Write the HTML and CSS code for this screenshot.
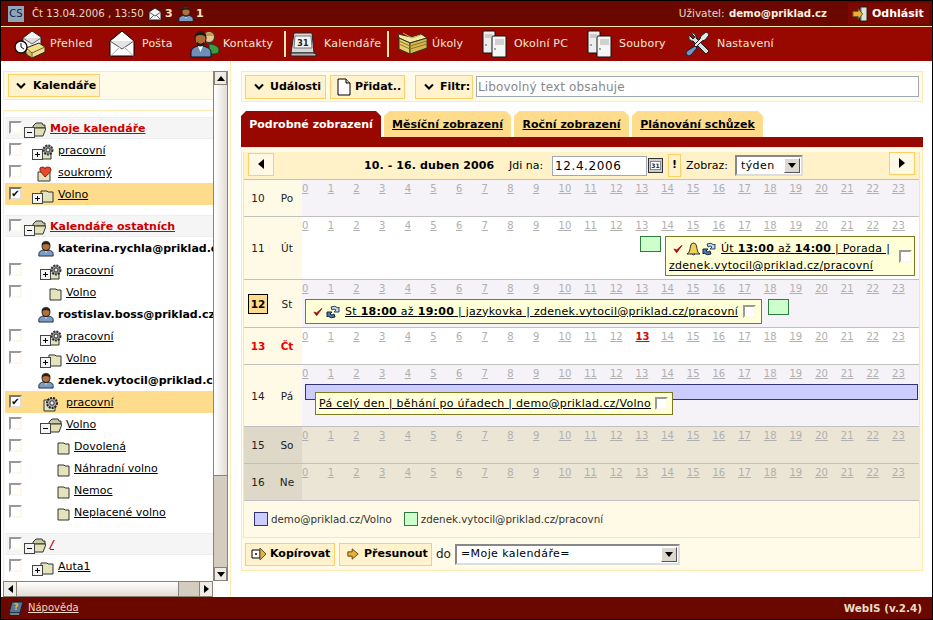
FILE: index.html
```html
<!DOCTYPE html>
<html lang="cs">
<head>
<meta charset="utf-8">
<title>WebIS - Kalendáře</title>
<link rel="stylesheet" href="styles.css">
</head>
<body>
<svg class="defs" width="0" height="0" aria-hidden="true">
<defs>
<symbol id="mail" viewBox="0 0 26 28"><path d="M1 11 13 1l12 10v15H1z" fill="#fff" stroke="#000"/><path d="M1 11l12 8 12-8" fill="#e4e4e4" stroke="#555"/><path d="M1.500 26 11 17M24.500 26 15 17" stroke="#aaa" fill="none"/></symbol>
<symbol id="mini-mail" viewBox="0 0 14 14"><path d="M1 5 7 1l6 4v8H1z" fill="#f4f4f4" stroke="#222"/><path d="M1 5l6 4 6-4M1 13l5-5M13 13 8 8" fill="none" stroke="#666"/></symbol>
<symbol id="person" viewBox="0 0 18 18"><path d="M1 17.500v-3c0-2 2-3 5-4h6c3 1 5 2 5 4v3z" fill="#7d9cc4" stroke="#123"/><path d="M7 10.500 9 14l2-3.500z" fill="#fff"/><path d="M4.500 6c0-4 2-5 4.500-5s4.500 1 4.500 5-2 5.500-4.500 5.500S4.500 10 4.500 6z" fill="#b5703a" stroke="#222"/><path d="M4.500 6V3q4.500-3 9 0v3q-1-2-4.500-2T4.500 6zM6 9q3 3.500 6 0v2l-3 1-3-1z" fill="#222"/></symbol>
<symbol id="overview" viewBox="0 0 31 29"><path d="M9 8 18 1l9 6v11H9z" fill="#f3f3f3" stroke="#222"/><path d="M9 8l9 6 9-6" fill="#ddd" stroke="#666"/><path d="M12 18l13-5 6 4v5l-13 6-6-4z" fill="#f2df8e" stroke="#222"/><path d="M12 18l6 5 13-6M18 23v5" fill="none" stroke="#6b5a1e"/><path d="M13 23h4M14 25h4" stroke="#b59a3a"/><circle cx="7" cy="17" r="6" fill="#fafafa" stroke="#111" stroke-width="1.400"/><path d="M7 13v4l3 2" fill="none" stroke="#111"/></symbol>
<symbol id="contacts" viewBox="0 0 30 28"><circle cx="19" cy="7" r="5.500" fill="#e4c88e" stroke="#333"/><path d="M15 4q4-3 8 0v2h-8z" fill="#c79a50"/><path d="M19 14c6 0 10 3 10 6s-2 4-5 4h-5z" fill="#3e9a3a" stroke="#143"/><path d="M1 27v-5c0-3 3-5 7-6h5c4 1 8 3 8 6v5z" fill="#6d8fb8" stroke="#012"/><path d="M8 16l2.500 6 2.500-6z" fill="#fff"/><path d="M5 8c0-4 2-6 5.500-6S16 4 16 8s-2 8-5.500 8S5 12 5 8z" fill="#b06c36" stroke="#111"/><path d="M5 8V4q5.500-4 11 0v4q-1-3-5.500-3T5 8zM7 12q3.500 3.500 7 0v3l-3.500 1L7 15z" fill="#1b1b1b"/></symbol>
<symbol id="calendar" viewBox="0 0 28 26"><path d="M4 2h18l2 20H1z" fill="#d8d8d8" stroke="#222"/><path d="M5 5h16l1 12H4z" fill="#f4f4f4" stroke="#777"/><path d="M1 22h23l3 2-2 1H1z" fill="#bbb" stroke="#222"/><text x="13" y="15" class="cal-num">31</text></symbol>
<symbol id="tasks" viewBox="0 0 32 26"><path d="M2 3 3 7l11 5 17-5-6-4-10 3z" fill="#f5e7a4" stroke="#332"/><path d="M3 7 14 12v11L3 18z" fill="#e7cf6c" stroke="#332"/><path d="M14 12 31 7v10L14 23z" fill="#d8b84e" stroke="#332"/><path d="M3 10l11 5M3 13l11 5M14 15l17-5M14 18l17-5" stroke="#8b7426" fill="none"/><path d="M7 2 16 7 25 4" stroke="#c9ad4a" fill="none"/></symbol>
<symbol id="server" viewBox="0 0 26 28"><path d="M2 2q0-1 1-1h10q1 0 1 1v20q0 1-1 1H3q-1 0-1-1z" fill="#eee" stroke="#111"/><path d="M11 7q0-1 1-1h12q1 0 1 1v19q0 1-1 1H12q-1 0-1-1z" fill="#f6f6f6" stroke="#111"/><path d="M4 5h7M4 7h7M14 10h9M14 12h9M14 14h9" stroke="#aaa" fill="none"/><circle cx="5" cy="15" r="1" fill="#888"/><circle cx="14" cy="19" r="1" fill="#888"/></symbol>
<symbol id="tools" viewBox="0 0 24 26"><path d="M5 2 9 6 7 8 3 4q-1 4 2 6l2 0 13 13 3-3L10 7V5Q8 1 5 2z" fill="#ddd" stroke="#222"/><path d="M22 2l-2-1-5 4-1 3L8 14l2 2 6-6 3-1 4-5z" fill="#e8e8e8" stroke="#222"/><path d="M9 15 11 17 5 24q-2 2-4 0t0-4z" fill="#6d96c0" stroke="#123"/></symbol>
<symbol id="book" viewBox="0 0 16 16"><path d="M4 2h11l-3 11H1z" fill="#5b7590" stroke="#123"/><path d="M1 13h11l-.5 2H2z" fill="#ddd" stroke="#123"/><text x="8" y="10" class="book-q">?</text></symbol>
<symbol id="logout" viewBox="0 0 18 18"><path d="M9 1h8v16H9z" fill="#999" stroke="#111"/><path d="M11 2h5v14h-5z" fill="#dde5d8"/><path d="M1 6h6V3l5 6-5 6v-3H1z" fill="#eeb030" stroke="#553"/></symbol>
<symbol id="folder" viewBox="0 0 22 16"><path d="M10 4V3h6l1 1h4v10H10z" fill="#e4e4bc" stroke="#333"/></symbol>
<symbol id="folder-plus" viewBox="0 0 22 16"><path d="M9 4V3h6l1 1h5v10H9z" fill="#e4e4bc" stroke="#333"/><rect x=".5" y="5.500" width="10" height="10" fill="#f4f4f4" stroke="#444"/><path d="M3 10.500h5M5.500 8v5" stroke="#000"/></symbol>
<symbol id="folder-minus" viewBox="0 0 22 16"><path d="M9 4 12 1h6l1 2h2v3h-9l-3 8z" fill="#c9c9a4" stroke="#333"/><path d="M9 6h13l-3 8H9z" fill="#e2e2b6" stroke="#333"/><rect x=".5" y="5.500" width="10" height="10" fill="#f4f4f4" stroke="#444"/><path d="M3 10.500h5" stroke="#000"/></symbol>
<symbol id="gear-plus" viewBox="0 0 22 16"><path d="M9 6h10v9H9z" fill="#e4e4bc" stroke="#333"/><circle cx="16" cy="6" r="4.500" fill="#999" stroke="#333" stroke-width="2" stroke-dasharray="2 1"/><circle cx="16" cy="6" r="2" fill="#eee" stroke="#333"/><rect x=".5" y="5.500" width="10" height="10" fill="#f4f4f4" stroke="#444"/><path d="M3 10.500h5M5.500 8v5" stroke="#000"/></symbol>
<symbol id="gear" viewBox="0 0 22 16"><path d="M4 4h11v11H4z" fill="#e4e4bc" stroke="#333"/><circle cx="12" cy="7" r="5" fill="#aaa" stroke="#222" stroke-width="2" stroke-dasharray="2 1"/><circle cx="12" cy="7" r="2.200" fill="#eee" stroke="#333"/></symbol>
<symbol id="heart" viewBox="0 0 22 16"><path d="M6 6h12v9H6z" fill="#e4e4bc" stroke="#333"/><path d="M13 11 8 5q-1-4 2-4t3 2q0-2 3-2t3 3q0 2-6 7z" fill="#e64a28" stroke="#822"/></symbol>
<symbol id="check" viewBox="0 0 11 10"><path d="M1 5 4 9 10 1 4 6z" fill="#a11" stroke="#a11"/></symbol>
<symbol id="bell" viewBox="0 0 15 14"><path d="M1 12q2-1 2.500-3t1-5q.5-3 3-3t3 3q.5 3 1 5t2.500 3z" fill="#f2cf5a" stroke="#333"/><path d="M6 12q1.500 2 3 0" fill="#c99" stroke="#333"/></symbol>
<symbol id="sync" viewBox="0 0 14 14"><path d="M5 2q4-2 7 1l1-1v5H8l2-2Q8 3 6 5z" fill="#cdd8e8" stroke="#246"/><path d="M9 12q-4 2-7-1l-1 1V7h5L4 9q2 2 4 0z" fill="#4a7db0" stroke="#123"/></symbol>
<symbol id="chev" viewBox="0 0 10 7"><path d="M1 1.500 5 5.500 9 1.500" fill="none" stroke="#000" stroke-width="2"/></symbol>
<symbol id="doc" viewBox="0 0 14 18"><path d="M1 1h8l4 4v12H1z" fill="#fff" stroke="#000"/><path d="M9 1v4h4" fill="#ccc" stroke="#000"/></symbol>
<symbol id="copy" viewBox="0 0 16 14"><path d="M1 3h8v8H1z" fill="#fff" stroke="#000"/><path d="M5 6v2M4 7h2" stroke="#000"/><path d="M9 1l6 6-6 6z" fill="#eeb030" stroke="#553"/></symbol>
<symbol id="move" viewBox="0 0 14 14"><path d="M1 4.500h5V1l7 6-7 6V9.500H1z" fill="#eeb030" stroke="#432"/></symbol>
<symbol id="cal-mini" viewBox="0 0 15 15"><rect x=".5" y=".5" width="14" height="14" fill="#ccc" stroke="#333"/><rect x="2.500" y="3.500" width="10" height="8" fill="#fff" stroke="#888"/><text x="7.500" y="10" class="cal-mini-num">31</text></symbol>
</defs>
</svg>

<div class="app">
  <header class="topbar">
    <span class="lang">CS</span>
    <span class="clock">Čt 13.04.2006 , 13:50</span>
    <svg class="ico-mail"><use href="#mini-mail"/></svg><b class="count count-mail">3</b>
    <svg class="ico-person"><use href="#person"/></svg><b class="count">1</b>
    <span class="user">Uživatel: <b>demo@priklad.cz</b></span>
    <a class="logout"><svg class="ico-logout"><use href="#logout"/></svg>Odhlásit</a>
  </header>

  <nav class="nav">
    <a class="nav-item"><svg class="i-overview"><use href="#overview"/></svg>Přehled</a>
    <a class="nav-item"><svg class="i-mail"><use href="#mail"/></svg>Pošta</a>
    <a class="nav-item"><svg class="i-contacts"><use href="#contacts"/></svg>Kontakty</a>
    <a class="nav-item nav-current"><svg class="i-calendar"><use href="#calendar"/></svg>Kalendáře</a>
    <a class="nav-item"><svg class="i-tasks"><use href="#tasks"/></svg>Úkoly</a>
    <a class="nav-item"><svg class="i-server"><use href="#server"/></svg>Okolní PC</a>
    <a class="nav-item"><svg class="i-server"><use href="#server"/></svg>Soubory</a>
    <a class="nav-item"><svg class="i-tools"><use href="#tools"/></svg>Nastavení</a>
  </nav>

  <main class="main">
    <aside class="left">
      <div class="left-col">
        <div class="left-head"><button class="btn btn-cal"><svg class="chev"><use href="#chev"/></svg>Kalendáře</button></div>
        <div class="tree">
          <section class="group">
            <div class="row row-head"><i class="cb"></i><svg class="node"><use href="#folder-minus"/></svg><a class="title">Moje kalendáře</a></div>
            <div class="row l1"><i class="cb"></i><svg class="node"><use href="#gear-plus"/></svg><a>pracovní</a></div>
            <div class="row l1"><i class="cb"></i><svg class="node"><use href="#heart"/></svg><a>soukromý</a></div>
            <div class="row l1 row-on"><i class="cb cb-on">✔</i><svg class="node"><use href="#folder-plus"/></svg><a>Volno</a></div>
          </section>
          <section class="group">
            <div class="row row-head"><i class="cb"></i><svg class="node"><use href="#folder-minus"/></svg><a class="title">Kalendáře ostatních</a></div>
            <div class="row row-user"><svg class="node-person"><use href="#person"/></svg><b>katerina.rychla@priklad.cz</b></div>
            <div class="row l2"><i class="cb"></i><svg class="node"><use href="#gear-plus"/></svg><a>pracovní</a></div>
            <div class="row l2"><i class="cb"></i><svg class="node"><use href="#folder"/></svg><a>Volno</a></div>
            <div class="row row-user"><svg class="node-person"><use href="#person"/></svg><b>rostislav.boss@priklad.cz</b></div>
            <div class="row l2"><i class="cb"></i><svg class="node"><use href="#gear-plus"/></svg><a>pracovní</a></div>
            <div class="row l2"><i class="cb"></i><svg class="node"><use href="#folder-plus"/></svg><a>Volno</a></div>
            <div class="row row-user"><svg class="node-person"><use href="#person"/></svg><b>zdenek.vytocil@priklad.cz</b></div>
            <div class="row l2 row-on"><i class="cb cb-on">✔</i><svg class="node"><use href="#gear"/></svg><a>pracovní</a></div>
            <div class="row l2"><i class="cb"></i><svg class="node"><use href="#folder-minus"/></svg><a>Volno</a></div>
            <div class="row l3"><i class="cb"></i><svg class="node"><use href="#folder"/></svg><a>Dovolená</a></div>
            <div class="row l3"><i class="cb"></i><svg class="node"><use href="#folder"/></svg><a>Náhradní volno</a></div>
            <div class="row l3"><i class="cb"></i><svg class="node"><use href="#folder"/></svg><a>Nemoc</a></div>
            <div class="row l3"><i class="cb"></i><svg class="node"><use href="#folder"/></svg><a>Neplacené volno</a></div>
          </section>
          <section class="group">
            <div class="row row-head"><i class="cb"></i><svg class="node"><use href="#folder-minus"/></svg><a class="title slash">/</a></div>
            <div class="row l1"><i class="cb"></i><svg class="node"><use href="#folder-plus"/></svg><a>Auta1</a></div>
          </section>
        </div>
      </div>
      <div class="vscroll">
        <span class="sb-btn"><i class="tri tri-up"></i></span>
        <span class="sb-thumb sb-thumb-v"></span>
        <span class="sb-track"></span>
        <span class="sb-btn"><i class="tri tri-down"></i></span>
      </div>
      <div class="hscroll">
        <span class="sb-btn"><i class="tri tri-left"></i></span>
        <span class="sb-thumb sb-thumb-h"></span>
        <span class="sb-track"></span>
        <span class="sb-btn"><i class="tri tri-right"></i></span>
      </div>
    </aside>

    <section class="right">
      <div class="toolbar">
        <button class="btn btn-events"><svg class="chev"><use href="#chev"/></svg>Události</button>
        <button class="btn btn-add"><svg class="ico-doc"><use href="#doc"/></svg>Přidat..</button>
        <button class="btn btn-filter"><svg class="chev"><use href="#chev"/></svg>Filtr:</button>
        <input class="filter" type="text" placeholder="Libovolný text obsahuje">
      </div>

      <div class="tabs">
        <a class="tab tab-on tab-1">Podrobné zobrazení</a>
        <a class="tab tab-2">Měsíční zobrazení</a>
        <a class="tab tab-3">Roční zobrazení</a>
        <a class="tab tab-4">Plánování schůzek</a>
      </div>
      <div class="tabline"></div>

      <div class="cal">
        <div class="cal-inner">
          <div class="cal-head">
            <button class="btn btn-nav"><i class="tri tri-left tri-big"></i></button>
            <b class="range">10. - 16. duben 2006</b>
            <span class="goto">Jdi na:</span>
            <input class="date" type="text" value="12.4.2006">
            <svg class="ico-calmini"><use href="#cal-mini"/></svg>
            <button class="btn btn-ex">!</button>
            <span class="show">Zobraz:</span>
            <span class="select select-week">týden<i class="sel-arrow"><i class="tri tri-down"></i></i></span>
            <button class="btn btn-nav btn-next"><i class="tri tri-right tri-big"></i></button>
          </div>

          <div class="day day-a">
            <div class="day-label"><span class="num">10</span><span class="dn">Po</span></div>
            <div class="slots">
              <div class="hours"><a>0</a><a>1</a><a>2</a><a>3</a><a>4</a><a>5</a><a>6</a><a>7</a><a>8</a><a>9</a><a>10</a><a>11</a><a>12</a><a>13</a><a>14</a><a>15</a><a>16</a><a>17</a><a>18</a><a>19</a><a>20</a><a>21</a><a>22</a><a>23</a></div>
            </div>
          </div>

          <div class="day day-b">
            <div class="day-label"><span class="num">11</span><span class="dn">Út</span></div>
            <div class="slots">
              <div class="hours"><a>0</a><a>1</a><a>2</a><a>3</a><a>4</a><a>5</a><a>6</a><a>7</a><a>8</a><a>9</a><a>10</a><a>11</a><a>12</a><a>13</a><a>14</a><a>15</a><a>16</a><a>17</a><a>18</a><a>19</a><a>20</a><a>21</a><a>22</a><a>23</a></div>
              <div class="events ev-tue">
                <span class="mark mark-green"></span>
                <div class="pop pop-tue">
                  <div class="pop-text">
                    <div class="pop-line pop-first"><svg class="e-check"><use href="#check"/></svg><svg class="e-bell"><use href="#bell"/></svg><svg class="e-sync"><use href="#sync"/></svg><a>Út <b>13:00</b> až <b>14:00</b> | Porada |</a></div>
                    <div class="pop-line"><a>zdenek.vytocil@priklad.cz/pracovní</a></div>
                  </div>
                  <i class="cb cb-pop"></i>
                </div>
              </div>
            </div>
          </div>

          <div class="day day-a">
            <div class="day-label"><span class="num num-sel">12</span><span class="dn">St</span></div>
            <div class="slots">
              <div class="hours"><a>0</a><a>1</a><a>2</a><a>3</a><a>4</a><a>5</a><a>6</a><a>7</a><a>8</a><a>9</a><a>10</a><a>11</a><a>12</a><a>13</a><a>14</a><a>15</a><a>16</a><a>17</a><a>18</a><a>19</a><a>20</a><a>21</a><a>22</a><a>23</a></div>
              <div class="events ev-wed">
                <div class="pop pop-wed">
                  <svg class="e-check"><use href="#check"/></svg><svg class="e-sync"><use href="#sync"/></svg><a>St <b>18:00</b> až <b>19:00</b> | jazykovka | zdenek.vytocil@priklad.cz/pracovní</a>
                  <i class="cb cb-pop"></i>
                </div>
                <span class="mark mark-green"></span>
              </div>
            </div>
          </div>

          <div class="day day-b day-today">
            <div class="day-label"><span class="num">13</span><span class="dn">Čt</span></div>
            <div class="slots">
              <div class="hours"><a>0</a><a>1</a><a>2</a><a>3</a><a>4</a><a>5</a><a>6</a><a>7</a><a>8</a><a>9</a><a>10</a><a>11</a><a>12</a><a class="now">13</a><a>14</a><a>15</a><a>16</a><a>17</a><a>18</a><a>19</a><a>20</a><a>21</a><a>22</a><a>23</a></div>
            </div>
          </div>

          <div class="day day-a">
            <div class="day-label"><span class="num">14</span><span class="dn">Pá</span></div>
            <div class="slots">
              <div class="hours"><a>0</a><a>1</a><a>2</a><a>3</a><a>4</a><a>5</a><a>6</a><a>7</a><a>8</a><a>9</a><a>10</a><a>11</a><a>12</a><a>13</a><a>14</a><a>15</a><a>16</a><a>17</a><a>18</a><a>19</a><a>20</a><a>21</a><a>22</a><a>23</a></div>
              <div class="ev-fri">
                <div class="mark-blue"></div>
                <div class="pop pop-fri"><a>Pá celý den | běhání po úřadech | demo@priklad.cz/Volno</a><i class="cb cb-pop"></i></div>
              </div>
            </div>
          </div>

          <div class="day day-w">
            <div class="day-label"><span class="num">15</span><span class="dn">So</span></div>
            <div class="slots">
              <div class="hours"><a>0</a><a>1</a><a>2</a><a>3</a><a>4</a><a>5</a><a>6</a><a>7</a><a>8</a><a>9</a><a>10</a><a>11</a><a>12</a><a>13</a><a>14</a><a>15</a><a>16</a><a>17</a><a>18</a><a>19</a><a>20</a><a>21</a><a>22</a><a>23</a></div>
            </div>
          </div>

          <div class="day day-w">
            <div class="day-label"><span class="num">16</span><span class="dn">Ne</span></div>
            <div class="slots">
              <div class="hours"><a>0</a><a>1</a><a>2</a><a>3</a><a>4</a><a>5</a><a>6</a><a>7</a><a>8</a><a>9</a><a>10</a><a>11</a><a>12</a><a>13</a><a>14</a><a>15</a><a>16</a><a>17</a><a>18</a><a>19</a><a>20</a><a>21</a><a>22</a><a>23</a></div>
            </div>
          </div>

          <div class="legend">
            <span class="swatch sw-blue"></span><span class="leg-text">demo@priklad.cz/Volno</span>
            <span class="swatch sw-green"></span><span class="leg-text">zdenek.vytocil@priklad.cz/pracovní</span>
          </div>
        </div>

        <div class="actions">
          <button class="btn btn-copy"><svg class="ico-copy"><use href="#copy"/></svg>Kopírovat</button>
          <button class="btn btn-move"><svg class="ico-move"><use href="#move"/></svg>Přesunout</button>
          <span class="do">do</span>
          <span class="select select-target">=Moje kalendáře=<i class="sel-arrow"><i class="tri tri-down"></i></i></span>
        </div>
      </div>
    </section>
  </main>

  <footer class="footer">
    <a class="help"><svg class="ico-book"><use href="#book"/></svg><u>Nápověda</u></a>
    <b class="version">WebIS (v.2.4)</b>
  </footer>
</div>
</body>
</html>
```

FILE: styles.css
```css
* { box-sizing: border-box; }
html, body { margin: 0; height: 100%; overflow: hidden; }
body { font: 11px/14px "DejaVu Sans", sans-serif; color: #000; background: #fff; }
.defs { position: absolute; }
svg { display: block; flex: none; }
a { color: inherit; }
.cal-num { font: bold 8px "DejaVu Sans", sans-serif; text-anchor: middle; fill: #222; }
.cal-mini-num { font: bold 6px "DejaVu Sans", sans-serif; text-anchor: middle; fill: #222; }
.book-q { font: bold 8px "DejaVu Sans", sans-serif; text-anchor: middle; fill: #e8c040; }

.app { height: 620px; border: 1px solid #000; display: flex; flex-direction: column; }

/* top */
.topbar { height: 26px; flex: none; background: #6a0800; border-bottom: 1px solid #ffe9b0; display: flex; align-items: center; padding-left: 7px; padding-right: 3px; color: #e9d6c0; }
.lang { width: 16px; height: 16px; background: #8fa5bd; color: #123; font-size: 10px; line-height: 16px; text-align: center; }
.clock { margin-left: 8px; width: 116px; white-space: pre; font-size: 10.2px; }
.ico-mail { width: 14px; height: 14px; }
.count { color: #f3e4c4; margin-left: 3px; width: 13px; }
.ico-person { width: 16px; height: 16px; margin-right: -1px; }
.user { margin-left: auto; margin-right: 21px; font-size: 10.5px; }
.user b { color: #f7efe0; margin-left: 1px; font-size: 10.2px; }
.logout { width: 81px; height: 21px; background: #7c0800; display: flex; align-items: center; padding-left: 4px; gap: 4px; color: #fff; font-weight: bold; }
.ico-logout { width: 16px; height: 16px; }

/* nav */
.nav { height: 34px; flex: none; background: #990800; padding-left: 13px; display: grid; grid-template-columns: 95px 81px 94px 112px 85px 105px 100px 1fr; align-items: center; color: #f6e8d8; letter-spacing: .2px; }
.nav-item { display: flex; align-items: center; white-space: nowrap; }
.nav-item svg { margin-right: 5px; }
.i-overview { width: 31px; height: 29px; }
.i-mail { width: 26px; height: 28px; margin-left: 0; }
.nav-item .i-mail { margin-right: 7px; }
.i-contacts { width: 30px; height: 28px; }
.nav-item .i-contacts { margin-right: 3px; }
.i-calendar { width: 28px; height: 26px; }
.nav-item .i-calendar { margin-right: 6px; }
.nav-current { width: 105px; height: 26px; border: 2px solid #ffe9b0; border-width: 0 2px; padding-left: 4px; }
.i-tasks { width: 32px; height: 26px; }
.nav-item .i-tasks { margin-right: 4px; }
.i-server { width: 26px; height: 28px; }
.nav-item .i-server { margin-right: 7px; }
.i-tools { width: 24px; height: 26px; }
.nav-item .i-tools { margin-right: 7px; }

/* main */
.main { flex: 1; min-height: 0; display: flex; padding: 10px 0 0 2px; }
.left { width: 227px; flex: none; display: grid; grid-template-columns: 210px 15px; grid-template-rows: 510px 16px; }
.left-col { min-width: 0; display: flex; flex-direction: column; }
.left-head { height: 29px; flex: none; background: #fffbe8; border: 1px solid #ffeab0; border-right: 0; padding: 2px 0 0 4px; }
.btn { font: bold 11px/14px "DejaVu Sans", sans-serif; color: #000; background: #fff2cc; border: 1px solid #ffcf66; padding: 0; display: inline-flex; align-items: center; flex: none; }
.btn-cal { width: 92px; height: 23px; padding-left: 7px; gap: 7px; }
.chev { width: 10px; height: 7px; }

/* tree */
.tree { flex: 1; min-height: 0; margin-top: 10px; border: 1px solid #ffeab0; border-width: 1px 0 0 1px; padding: 6px 0 0 1px; overflow: hidden; background: #fff; }
.group { margin-bottom: 10px; }
.row { height: 22px; display: flex; align-items: center; padding-left: 4px; white-space: nowrap; }
.row a { text-decoration: underline; padding-top: 2px; }
.row b { padding-top: 2px; }
.cb { display: block; width: 13px; height: 13px; flex: none; align-self: flex-start; margin-top: 4px; background: #fff; border: 2px solid; border-color: #999 #fdf8ea #fdf8ea #999; font: 10px/9px "DejaVu Sans", sans-serif; color: #000; }
.cb-on { border-color: #777 #ddd #ddd #777; text-align: center; overflow: hidden; }
.node { width: 22px; height: 16px; align-self: flex-start; margin: 5px 4px 0 2px; }
.l1 .node { margin-left: 10px; }
.l2 .node { margin-left: 18px; }
.l3 .node { margin-left: 26px; }
.row-head { background: #f5f5f5; border: 1px solid #eee; border-width: 1px 0; padding-left: 4px; }
.row-head .cb { margin-top: 3px; }
.row-head .node { margin-top: 4px; }
.title { color: #cc0000; font-weight: bold; }
.slash { font-style: italic; }
.row-on { background: #ffdc8c; }
.row-user { padding-left: 33px; }
.node-person { width: 16px; height: 17px; margin-right: 4px; }

/* scrollbars */
.vscroll { display: flex; flex-direction: column; border: solid #8a8278; border-width: 0 1px; background: #d4ccbe; }
.hscroll { grid-column: 1; display: flex; background: #d4ccbe; border: solid #8a8278; border-width: 1px 0; }
.sb-btn { flex: none; width: 13px; height: 14px; background: #efece6; border: 1px solid #8a8278; display: flex; align-items: center; justify-content: center; }
.hscroll .sb-btn { width: 14px; height: 14px; border-width: 0 1px; }
.sb-thumb { flex: none; background: linear-gradient(90deg, #fff, #e2ddd4); }
.sb-thumb-v { height: 391px; border-bottom: 1px solid #8a8278; }
.sb-thumb-h { width: 162px; background: linear-gradient(180deg, #fff, #e2ddd4); border-right: 1px solid #8a8278; }
.sb-track { flex: 1; }
.tri { display: block; width: 0; height: 0; border: 4px solid transparent; }
.tri-up { border-top: 0; border-bottom: 5px solid #000; }
.tri-down { border-bottom: 0; border-top: 5px solid #000; }
.tri-left { border-left: 0; border-right: 5px solid #000; }
.tri-right { border-right: 0; border-left: 5px solid #000; }
.tri-right.tri-big { border-width: 5px 0 5px 6px; }
.tri-left.tri-big { border-width: 5px 6px 5px 0; }

/* right */
.right { width: 692px; flex: none; margin-top: -10px; padding: 10px 0 0 10px; border-left: 1px solid #ffe9b0; }
.toolbar { height: 31px; width: 682px; background: #fffbe8; border: 1px solid #ffeab0; display: flex; align-items: center; padding-left: 3px; }
.btn-events { width: 81px; height: 24px; padding-left: 8px; gap: 6px; }
.btn-add { width: 75px; height: 24px; margin-left: 4px; padding-left: 6px; gap: 4px; }
.ico-doc { width: 14px; height: 18px; }
.btn-filter { width: 58px; height: 24px; margin-left: 10px; padding-left: 8px; gap: 6px; }
.filter { width: 443px; height: 21px; margin-left: 3px; border: 1px solid #a0a8b0; background: #fff; padding: 0 1px; font: 12px "DejaVu Sans", sans-serif; letter-spacing: .15px; color: #888; outline: 0; }
.filter::placeholder { color: #888; opacity: 1; }

.tabs { display: flex; gap: 3px; margin-top: 9px; height: 26px; }
.tab { height: 26px; font-weight: bold; text-decoration: underline; line-height: 28px; text-align: center; background: #ffdc8c; clip-path: polygon(5px 0, calc(100% - 5px) 0, 100% 5px, 100% 100%, 0 100%, 0 5px); white-space: nowrap; }
.tab-on { background: #990800; color: #fff; text-decoration: none; }
.tab-1 { width: 140px; }
.tab-2 { width: 127px; }
.tab-3 { width: 115px; }
.tab-4 { width: 131px; }
.tabline { width: 682px; height: 10px; background: #990800; }

.cal { width: 682px; background: #fffbe8; border: 1px solid #ffeab0; padding: 4px 1px 0 1px; height: 424px; }
.cal-inner { border-left: 1px solid #ffe5a0; border-right: 1px solid #ffe5a0; border-bottom: 1px solid #ffe5a0; margin-right: 1px; }
.cal-head { height: 28px; background: #fff2c8; border-bottom: 1px solid #c0c0c0; display: flex; align-items: center; padding: 0 4px; }
.btn-nav { width: 26px; height: 23px; justify-content: center; background: #fff8e4; margin-top: -3px; }
.range { margin-left: 90px; width: 145px; white-space: nowrap; letter-spacing: .1px; }
.goto { width: 43px; }
.date { width: 95px; height: 20px; border: 1px solid #a0a8b0; background: #fff; padding: 0 1px 0 2px; font: 12px "DejaVu Sans", sans-serif; letter-spacing: .6px; outline: 0; }
.ico-calmini { width: 15px; height: 15px; margin-left: 1px; }
.btn-ex { width: 13px; height: 23px; justify-content: center; margin-left: 5px; margin-top: -1px; }
.show { margin-left: 5px; width: 49px; }
.select { display: flex; align-items: center; background: #fff; border: 2px solid; border-color: #888 #ddd #ddd #888; padding-left: 4px; font-size: 11px; letter-spacing: .4px; }
.select-week { width: 68px; height: 21px; }
.sel-arrow { margin-left: auto; margin-right: 1px; width: 16px; height: 15px; background: #dcd8d0; border: 1px solid; border-color: #fff #555 #555 #fff; display: flex; align-items: center; justify-content: center; }
.btn-next { margin-left: auto; margin-top: -5px; }

.day { display: flex; border-bottom: 1px solid #c0c0c0; }
.day-label { width: 58px; flex: none; display: flex; align-items: center; background: #fffae6; color: #222; font-size: 10.5px; }
.num { width: 28px; text-align: center; }
.dn { width: 30px; text-align: center; }
.num-sel { width: 20px; height: 20px; margin: 0 4px; background: #ffdc8c; border: 1px solid #000; font-weight: bold; color: #000; line-height: 18px; }
.slots { flex: 1; padding-bottom: 3px; min-height: 36px; }
.day-a .slots { background: #f5f2f8; }
.day-b .slots { background: #fff; }
.day-w .slots { background: #ebe5d5; }
.day-w .day-label { background: #ddd8c8; }
.day-today .day-label { color: #f00000; font-weight: bold; }
.hours { display: grid; grid-template-columns: repeat(24, 25.67px); height: 19px; padding-top: 3px; font-size: 10px; line-height: 12px; color: #b0b0b0; }
.hours a { text-decoration: underline; justify-self: start; }
.hours .now { color: #e00000; font-weight: bold; }
.events { display: flex; align-items: flex-start; }
.ev-tue { margin-left: 338px; gap: 4px; }
.ev-wed { margin-left: 3px; gap: 6px; }
.mark { flex: none; display: block; height: 16px; }
.mark-green { background: #ccffcc; border: 1px solid #2e7d3e; width: 21px; }
.pop { background: #ffffd8; border: 1px solid #7a7a20; white-space: nowrap; letter-spacing: .28px; }
.pop a { text-decoration: underline; }
.pop-tue { width: 250px; height: 40px; display: flex; padding: 3px 0 0 3px; }
.pop-text { width: 230px; }
.pop-line { height: 17px; display: flex; align-items: center; }
.pop-first { padding-left: 4px; }
.e-check { width: 10px; height: 10px; margin-right: 3px; }
.e-bell { width: 15px; height: 14px; margin-right: 1px; }
.e-sync { width: 14px; height: 14px; margin-right: 5px; }
.pop-tue .cb-pop { margin: 10px 0 0 0; }
.cb-pop { flex: none; }
.pop-wed { width: 457px; height: 25px; display: flex; align-items: center; padding-left: 7px; }
.pop-wed .e-check { margin-right: 3px; }
.pop-wed .cb-pop { margin: 5px 0 0 5px; align-self: flex-start; }
.ev-fri { padding: 0 1px 8px 3px; }
.mark-blue { height: 16px; background: #ccccff; border: 1px solid #333377; }
.pop-fri { width: 358px; height: 23px; margin: -8px 0 0 10px; display: flex; align-items: center; padding-left: 3px; }
.pop-fri .cb-pop { margin: 0 0 0 4px; align-self: center; }

.legend { height: 36px; display: flex; align-items: center; padding-left: 10px; color: #333; background: #fffae6; font-size: 10.3px; }
.swatch { width: 14px; height: 14px; margin-right: 3px; border: 1px solid; }
.sw-blue { background: #ccccff; border-color: #333377; }
.sw-green { background: #ccffcc; border-color: #2e7d3e; margin-left: 12px; }

.actions { display: flex; align-items: center; height: 32px; padding-left: 2px; }
.btn-copy { width: 90px; height: 23px; padding-left: 5px; gap: 3px; }
.ico-copy { width: 16px; height: 14px; }
.btn-move { width: 93px; height: 23px; margin-left: 4px; padding-left: 7px; gap: 5px; }
.ico-move { width: 12px; height: 12px; }
.do { margin-left: 4px; width: 19px; color: #222; font-size: 12px; }
.select-target { width: 225px; height: 21px; }

/* footer */
.footer { height: 22px; flex: none; background: #6a0800; display: flex; align-items: center; justify-content: space-between; padding: 0 10px 0 7px; }
.help { display: flex; align-items: center; gap: 4px; color: #f2d6c0; font-size: 10px; }
.ico-book { width: 16px; height: 16px; }
.version { color: #e8dcc4; font-size: 10.4px; }
```
